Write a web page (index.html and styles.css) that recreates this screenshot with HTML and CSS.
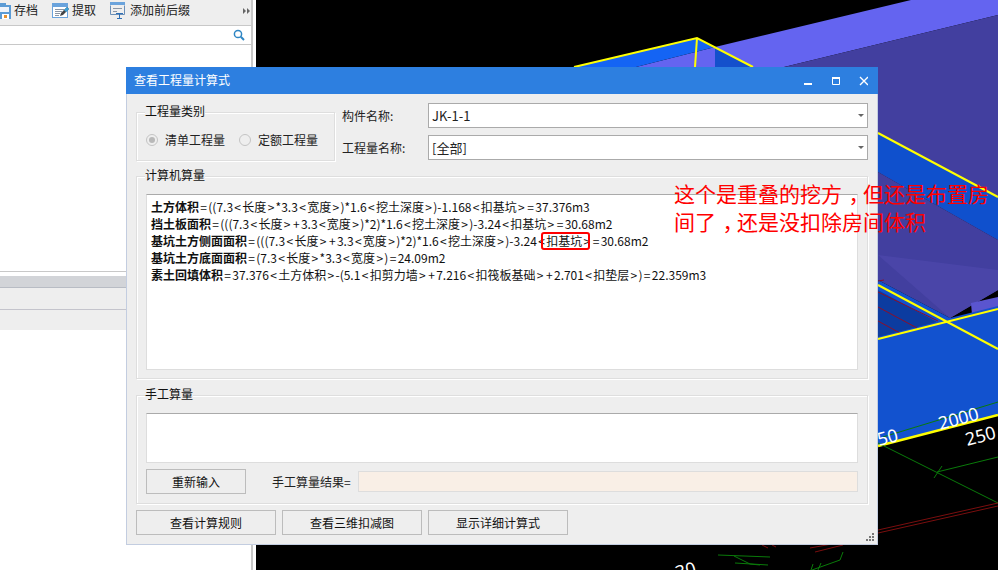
FILE: index.html
```html
<!DOCTYPE html>
<html lang="zh">
<head>
<meta charset="utf-8">
<title>查看工程量计算式</title>
<link rel="stylesheet" href="styles.css">
</head>
<body>
<div class="desktop">
  <aside class="side">
    <div class="toolbar">
      <div class="tool tool-save">
        <svg class="ico" width="11" height="17" viewBox="0 0 11 17"><path fill="#5b9bd5" d="M0 1h6v2H0zM0 3h11v14H0z"/><path fill="#eef3fa" d="M0 5h9v5H0z"/><path fill="#fff" d="M2 12h7v5H2z"/><path fill="#e8912d" d="M4 13h3v3H4z"/></svg>
        <span>存档</span>
      </div>
      <div class="tool tool-get">
        <svg class="ico" width="17" height="17" viewBox="0 0 17 17"><path fill="#6aa3dc" d="M0 1h16v15H0z"/><path fill="#fff" d="M1 5h14v10H1z"/><path fill="#8a96a6" d="M3 7h9v1H3zM3 9h7v1H3zM3 11h5v1H3zM3 13h4v1H3z"/><path fill="#444" d="M8 14l1-3 6-6 2 2-6 6z"/><path fill="#39a0d8" d="M12 8l3-3 2 2-3 3z"/></svg>
        <span>提取</span>
      </div>
      <div class="tool tool-add">
        <svg class="ico" width="16" height="17" viewBox="0 0 16 17"><path fill="#6aa3dc" d="M0 0h15v3H0z"/><path fill="none" stroke="#6a8fb8" d="M.5 3.500v9h14v-9"/><path fill="#8a96a6" d="M3 6h9v1H3zM3 9h4v1H3z"/><path fill="#2f6fb5" d="M6 11h7v1H6zM9 11h1v5H9zM7 16h5v1H7z"/></svg>
        <span>添加前后缀</span>
      </div>
      <div class="more"><i class="tri"></i><i class="tri"></i></div>
    </div>
    <div class="search">
      <svg width="12" height="12" viewBox="0 0 12 12"><circle cx="5" cy="5" r="3.600" fill="none" stroke="#2f86c4" stroke-width="1.500"/><path d="M7.800 7.800L11 11" stroke="#2f86c4" stroke-width="2"/></svg>
    </div>
    <div class="list"></div>
    <div class="panel-head"></div>
    <div class="panel-row"></div>
    <div class="panel-row last"></div>
  </aside>

  <svg class="cad" width="742" height="570" viewBox="256 0 742 570">
    <rect x="256" y="0" width="742" height="570" fill="#000"/>
    <path fill="#6464f0" d="M911 0H998V15L784 67H636L715 47z"/>
    <path fill="#423f9f" d="M998 15V240L878 172V67H784z"/>
    <path fill="#1464f4" d="M574 67L697 38L715 47L636 67z"/>
    <path fill="#1450cc" d="M715 47L753 67H715z"/>
    <path fill="#0f50cd" d="M878 133L998 197V240L878 172z"/>
    <path fill="#423f9f" d="M878 172L998 240V290L950 318L878 280z"/>
    <path fill="#4a45a8" d="M878 255L950 318L998 290V270z"/>
    <path fill="#5a55cf" d="M971 303L998 297V310L972 315z"/>
    <path fill="#1252cf" d="M878 280L950 318L998 306V415L878 446z"/>
    <path fill="#0c3ca0" d="M878 290L937 322L878 337z"/>
    <g stroke="#8c0f2a" fill="none" stroke-width="1">
      <path d="M878 281L884 280M878 292L938 321M878 307L917 328M878 321L900 333"/>
    </g>
    <g stroke="#ffff00" fill="none" stroke-width="2">
      <path d="M574 67L697 38L753 67M697 38L695 67"/>
      <path d="M878 133L998 197M878 285L998 349M878 339L998 309"/>
      <path stroke-width="2.500" d="M878 446L998 415"/>
    </g>
    <g stroke="#0a7a0a" fill="none" stroke-width="1">
      <path d="M883 437L998 402M878 443L998 503M937 472L998 457M942 466L934 478"/>
      <path d="M718 555L770 557M734 556L750 564L760 565M735 563L768 565M812 570L840 560M813 564L811 570M821 563L818 570M840 560L843 552"/>
    </g>
    <g stroke="#7a0e0e" fill="none" stroke-width="1">
      <path d="M878 530L998 503M878 533L998 506M810 548L843 542M815 552L843 545M762 545L768 548M772 545L776 547"/>
    </g>
  </svg>
  <span class="dim dim-a">2000</span>
  <span class="dim dim-b">250</span>
  <span class="dim dim-c">50</span>
  <span class="dim dim-d">30</span>

  <section class="dialog">
    <header class="titlebar">
      <span class="title">查看工程量计算式</span>
      <div class="controls">
        <svg width="64" height="10" viewBox="0 0 64 10"><path fill="#fff" d="M0 7h8v2H0z"/><path fill="none" stroke="#fff" d="M28.500 2.500h7v6h-7z"/><path fill="#fff" d="M28 1h8v2h-8z"/><path stroke="#fff" stroke-width="1.400" d="M56 1l8 8M64 1l-8 8"/></svg>
      </div>
    </header>
    <div class="body">
      <div class="top">
        <fieldset class="group kind">
          <legend>工程量类别</legend>
          <div class="radios">
            <label class="radio on"><i class="dot"></i>清单工程量</label>
            <label class="radio"><i class="dot"></i>定额工程量</label>
          </div>
        </fieldset>
        <div class="form">
          <span class="lbl">构件名称:</span>
          <div class="combo"><span>JK-1-1</span><i class="caret"></i></div>
          <span class="lbl">工程量名称:</span>
          <div class="combo"><span>[全部]</span><i class="caret"></i></div>
        </div>
      </div>
      <fieldset class="group calc">
        <legend>计算机算量</legend>
        <div class="box formulas">
          <p><b>土方体积</b><s>=</s>((7.3<s>&lt;</s>长度<s>&gt;</s>*3.3<s>&lt;</s>宽度<s>&gt;</s>)*1.6<s>&lt;</s>挖土深度<s>&gt;</s>)-1.168<s>&lt;</s>扣基坑<s>&gt;</s><s>=</s>37.376m3</p>
          <p><b>挡土板面积</b><s>=</s>(((7.3<s>&lt;</s>长度<s>&gt;</s><s>+</s>3.3<s>&lt;</s>宽度<s>&gt;</s>)*2)*1.6<s>&lt;</s>挖土深度<s>&gt;</s>)-3.24<s>&lt;</s>扣基坑<s>&gt;</s><s>=</s>30.68m2</p>
          <p><b>基坑土方侧面面积</b><s>=</s>(((7.3<s>&lt;</s>长度<s>&gt;</s><s>+</s>3.3<s>&lt;</s>宽度<s>&gt;</s>)*2)*1.6<s>&lt;</s>挖土深度<s>&gt;</s>)-3.24<s>&lt;</s>扣基坑<s>&gt;</s><s>=</s>30.68m2</p>
          <p><b>基坑土方底面面积</b><s>=</s>(7.3<s>&lt;</s>长度<s>&gt;</s>*3.3<s>&lt;</s>宽度<s>&gt;</s>)<s>=</s>24.09m2</p>
          <p><b>素土回填体积</b><s>=</s>37.376<s>&lt;</s>土方体积<s>&gt;</s>-(5.1<s>&lt;</s>扣剪力墙<s>&gt;</s><s>+</s>7.216<s>&lt;</s>扣筏板基础<s>&gt;</s><s>+</s>2.701<s>&lt;</s>扣垫层<s>&gt;</s>)<s>=</s>22.359m3</p>
        </div>
      </fieldset>
      <fieldset class="group manual">
        <legend>手工算量</legend>
        <div class="box entry"></div>
        <div class="manual-row">
          <button class="btn reset">重新输入</button>
          <span class="result-lbl">手工算量结果=</span>
          <div class="result"></div>
        </div>
      </fieldset>
      <div class="actions">
        <button class="btn wide">查看计算规则</button>
        <button class="btn wide">查看三维扣减图</button>
        <button class="btn wide">显示详细计算式</button>
      </div>
    </div>
    <svg class="grip" width="10" height="10" viewBox="0 0 10 10"><path fill="#777" d="M7 0h2v2H7zM4 3h2v2H4zM7 3h2v2H7zM1 6h2v2H1zM4 6h2v2H4zM7 6h2v2H7z"/></svg>
  </section>

  <div class="mark"></div>
  <div class="note">这个是重叠的挖方<span class="comma">，</span>但还是布置房<br>间了<span class="comma">，</span>还是没扣除房间体积</div>
</div>
</body>
</html>
```

FILE: styles.css
```css
* { box-sizing: border-box; }
html, body { margin: 0; padding: 0; }
body { width: 998px; height: 570px; overflow: hidden; background: #000; font: 12px/16px "Noto Sans CJK SC", "Noto Sans", sans-serif; color: #111; }
.desktop { position: relative; width: 998px; height: 570px; display: flex; overflow: hidden; }

.side { width: 256px; height: 570px; background: #fff; flex: none; display: flex; flex-direction: column; border-right: 3px solid #fff; position: relative; }
.side::after { content: ""; position: absolute; left: 251px; top: 0; bottom: 0; width: 2px; background: #c8c8c8; }
.toolbar { height: 26px; background: #eee; border-bottom: 1px solid #c8c8c8; display: flex; align-items: flex-start; position: relative; }
.tool { display: flex; align-items: center; gap: 3px; color: #222; height: 20px; }
.tool-save { width: 52px; }
.tool-get { width: 58px; }
.tool-add { gap: 4px; }
.ico { flex: none; }
.more { position: absolute; left: 243px; top: 8px; display: flex; gap: 1px; }
.tri { width: 0; height: 0; border-left: 3px solid #666; border-top: 3px solid transparent; border-bottom: 3px solid transparent; }
.search { height: 19px; border-bottom: 1px solid #c8c8c8; display: flex; justify-content: flex-end; align-items: center; padding-right: 6px; width: 251px; }
.list { height: 227px; border-bottom: 1px solid #c8c8c8; width: 251px; flex: none; }
.panel-head { margin-top: 4px; height: 12px; background: #d2d4d8; border-bottom: 1px solid #b8bcc4; width: 251px; }
.panel-row { height: 22px; background: #eee; border-bottom: 1px solid #c4c4cc; width: 251px; }
.panel-row.last { height: 20px; border-bottom: 0; }

.cad { flex: none; display: block; }
.dim { position: absolute; color: #fff; font: 18px/20px "Noto Sans", sans-serif; transform: rotate(-15deg); transform-origin: left bottom; }
.dim-a { left: 941px; top: 413px; }
.dim-b { left: 968px; top: 429px; }
.dim-c { left: 880px; top: 429px; }
.dim-d { left: 678px; top: 562px; }

.dialog { position: absolute; left: 126px; top: 67px; width: 752px; height: 478px; background: #eee; border: 1px solid #c3cde0; border-top: 0; display: flex; flex-direction: column; }
.titlebar { height: 27px; flex: none; margin: 0 -1px; background: #2d7fe0; color: #fff; display: flex; align-items: center; justify-content: space-between; padding: 0 10px 2px 8px; }
.controls { display: flex; margin-top: 2px; }
.controls svg { display: block; }
.body { flex: 1; padding: 9px 9px 0; display: flex; flex-direction: column; }

.group { margin: 0; padding: 0 9px; min-width: 0; border: 1px solid #dedede; box-shadow: 1px 1px 0 #fff, inset 1px 1px 0 #fff; }
.group legend { padding: 0 0 2px; margin: 0 0 0 -1px; font-size: 12px; line-height: 12px; color: #111; background: #eee; }
.top { display: flex; flex: none; height: 58px; }
.kind { width: 199px; height: 56px; margin-top: 2px; flex: none; }
.radios { display: flex; gap: 14px; margin-top: 13px; }
.radio { display: flex; align-items: center; gap: 7px; color: #222; }
.dot { width: 12px; height: 12px; border-radius: 50%; border: 1px solid #c4c4c4; background: #eee; position: relative; flex: none; }
.radio.on .dot::after { content: ""; position: absolute; left: 2px; top: 2px; width: 6px; height: 6px; border-radius: 50%; background: #b8b8b8; }
.form { flex: 1; margin-left: 7px; display: grid; grid-template-columns: 86px 1fr; grid-auto-rows: 25px; row-gap: 7px; align-items: center; }
.lbl { color: #222; }
.combo { height: 25px; background: #fff; border: 1px solid #aaa; display: flex; align-items: center; justify-content: space-between; padding: 0 3px 0 3px; color: #222; font-size: 13px; }
.caret { width: 0; height: 0; border-top: 3px solid #666; border-left: 3px solid transparent; border-right: 3px solid transparent; }

.calc { height: 210px; margin-top: 8px; flex: none; }
.box { background: #fff; border: 1px solid #ddd; border-top-color: #aaa; }
.formulas { height: 176px; margin-top: 11px; padding: 3px 4px; }
.formulas p { margin: 0; height: 17px; line-height: 17px; white-space: nowrap; }
.formulas b { font-weight: 700; }
.formulas s { text-decoration: none; margin: 0 1.300px; }

.manual { height: 116px; margin-top: 9px; flex: none; }
.entry { height: 50px; margin-top: 11px; }
.manual-row { display: flex; align-items: center; margin-top: 6px; height: 25px; }
.btn { font: inherit; color: #111; background: #eee; border: 1px solid #bcbcbc; height: 25px; padding: 0; }
.reset { width: 100px; flex: none; }
.result-lbl { margin-left: 26px; width: 86px; flex: none; color: #222; }
.result { flex: 1; height: 21px; background: #f9efe6; border: 1px solid #ddd; }

.actions { display: flex; gap: 6px; margin-top: 6px; flex: none; }
.wide { width: 140px; }
.grip { position: absolute; right: 2px; bottom: 1px; }

.mark { position: absolute; left: 541px; top: 232px; width: 49px; height: 18px; border: 2px solid #f00; border-radius: 3px; }
.note { position: absolute; left: 674px; top: 179px; font-size: 21px; line-height: 28px; color: #f00; white-space: nowrap; }
.comma { font-feature-settings: "halt"; padding: 0 4px 0 6.500px; }
```
